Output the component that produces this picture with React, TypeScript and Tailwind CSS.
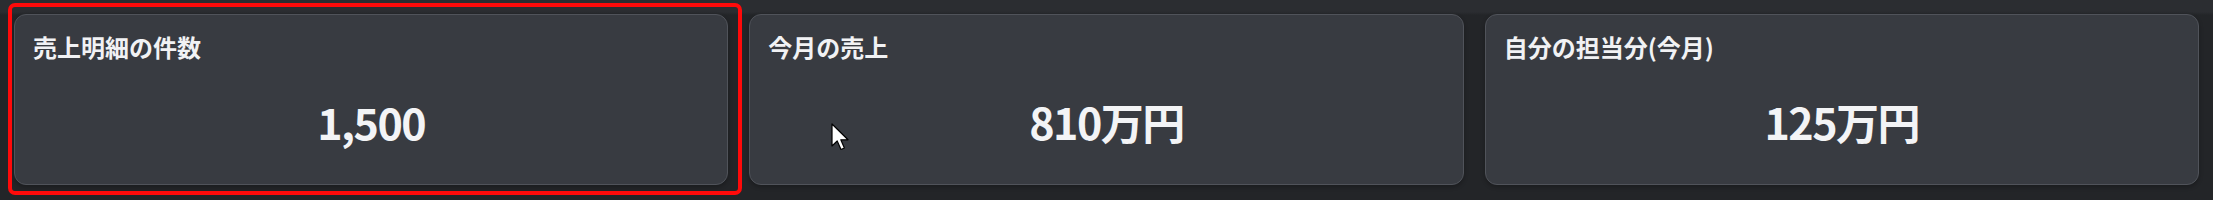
import React from "react";

type StatCardProps = {
	label: string;
	value: string;
};

function StatCard({ label, value }: StatCardProps) {
	return (
		<div className="flex flex-col h-[171px] rounded-xl border border-[#50535a] bg-[#383b41] pt-[14px] pl-[18px] pr-[18px] pb-[14px] shadow-[0_2px_4px_rgba(0,0,0,0.25)]">
			<p className="text-[24px] leading-[36px] font-bold text-[#f1f2f4]">
				{label}
			</p>
			<div className="flex flex-1 items-center justify-center pt-[8px]">
				<p className="text-[43px] leading-none font-bold text-[#f3f4f6] tracking-[-1.5px]">
					{value}
				</p>
			</div>
		</div>
	);
}

function Cursor() {
	return (
		<svg
			className="absolute left-[831px] top-[123px]"
			width="19"
			height="28"
			viewBox="0 0 19 28"
		>
			<path
				d="M1 1 L1 23 L6.2 18 L10 26.5 L13.4 25 L9.8 16.8 L17 16.8 Z"
				fill="#ffffff"
				stroke="#000000"
				strokeWidth="1.2"
				strokeLinejoin="round"
			/>
		</svg>
	);
}

export default function App() {
	const stats = [
		{ label: "売上明細の件数", value: "1,500" },
		{ label: "今月の売上", value: "810万円" },
		{ label: "自分の担当分(今月)", value: "125万円" },
	];

	return (
		<div
			className="relative h-[200px] w-full overflow-hidden bg-[linear-gradient(to_bottom,#2b2d31_0px,#2b2d31_12px,#232528_15px,#232528_100%)] px-[14px] pt-[14px]"
			style={{ fontFamily: '"Noto Sans CJK JP", "Noto Sans", sans-serif' }}
		>
			<div className="grid grid-cols-3 gap-[21px]">
				{stats.map((s) => (
					<StatCard key={s.label} label={s.label} value={s.value} />
				))}
			</div>

			{/* selection highlight around first card */}
			<div className="pointer-events-none absolute left-[8px] top-[3px] w-[734px] h-[192px] rounded-[7px] border-[4px] border-[#ff0a0a]" />
			<Cursor />
		</div>
	);
}
